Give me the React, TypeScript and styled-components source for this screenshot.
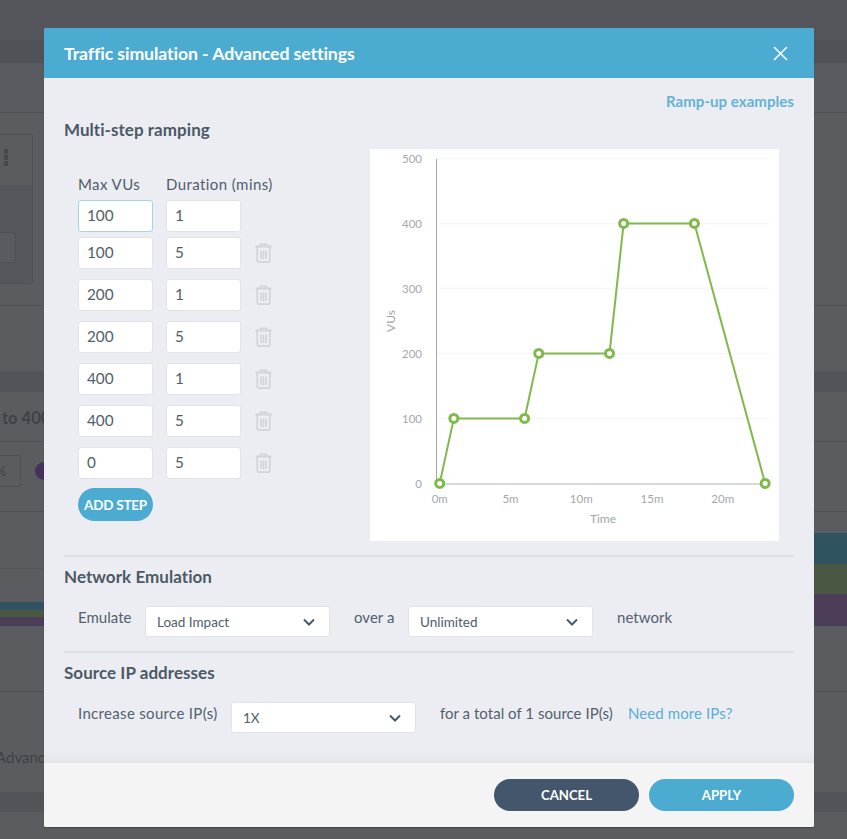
import React from 'react'
import styled, { createGlobalStyle } from 'styled-components'

const GlobalStyle = createGlobalStyle`
  html, body { margin: 0; padding: 0; background: #5b5c60; }
  body { font-family: Lato, "Open Sans", sans-serif; overflow: hidden; }
  * { box-sizing: border-box; }
`

const Page = styled.div`
  position: relative;
  width: 847px;
  height: 839px;
  overflow: hidden;
  background: #5b5c60;
`

/* dimmed page behind the modal */
const Band = styled.div<{ $h: number; $bg?: string; $line?: boolean }>`
  height: ${p => p.$h}px;
  background: ${p => p.$bg || 'transparent'};
  border-bottom: ${p => (p.$line ? '1px solid #505156' : 'none')};
  overflow: hidden;
`
const CardBand = styled(Band)`
  padding-top: 21px;
`
const GhostCard = styled.div`
  width: 33px;
  height: 150px;
  border: 1px solid #4f5055;
  border-left: 0;
  border-radius: 0 3px 3px 0;
  background: #56575c;
  overflow: hidden;
`
const GhostCardTop = styled.div`
  height: 50px;
  background: #5b5c60;
  padding: 14px 0 0 4px;
  display: flex;
  flex-direction: column;
  gap: 1px;
`
const GhostDot = styled.span`
  width: 4px;
  height: 5px;
  background: #47484c;
`
const GhostBox = styled.div`
  width: 16px;
  height: 31px;
  margin-top: 47px;
  background: #5a5b60;
  border: 1px solid #4f5055;
  border-left: 0;
  border-radius: 0 3px 3px 0;
`
const GhostHeading = styled.div`
  padding: 14px 0 0 2px;
  font-size: 16.5px;
  line-height: 24px;
  font-weight: 700;
  color: #404248;
  white-space: nowrap;
`
const GhostRow = styled.div`
  display: flex;
  align-items: center;
  padding-top: 13px;
`
const GhostPercent = styled.div`
  width: 21px;
  height: 32px;
  border: 1px solid #4f5055;
  border-left: 0;
  border-radius: 0 3px 3px 0;
  font-size: 14px;
  line-height: 30px;
  color: #404248;
  overflow: hidden;
  text-indent: -5px;
`
const GhostCircle = styled.span`
  width: 18px;
  height: 18px;
  margin-left: 14px;
  border-radius: 50%;
  background: #45325a;
`
const GhostLink = styled.div`
  padding-top: 55px;
  margin-left: -4px;
  font-size: 15px;
  line-height: 20px;
  color: #3f4146;
  white-space: nowrap;
`
const GhostChart = styled.svg`
  display: block;
`

/* modal */
const Modal = styled.div`
  position: absolute;
  left: 44px;
  top: 28px;
  width: 770px;
  height: 799px;
  display: flex;
  flex-direction: column;
  background: #ecedf2;
  border-radius: 3px 3px 2px 2px;
  overflow: hidden;
  box-shadow: 0 1px 1px rgba(0, 0, 0, 0.25);
`
const Header = styled.div`
  height: 50px;
  flex: none;
  display: flex;
  align-items: center;
  justify-content: space-between;
  padding: 0 26px 0 20px;
  background: #4babd0;
  color: #fff;
`
const HeaderTitle = styled.div`
  padding-top: 1px;
  font-size: 17.7px;
  font-weight: 700;
  letter-spacing: -0.1px;
`
const CloseIcon = styled.svg`
  display: block;
`
const Body = styled.div`
  flex: 1;
  padding: 0 20px;
  background: linear-gradient(to top, #e4e5e9 0, #ecedf2 12px);
`
const RampLink = styled.a`
  display: block;
  margin-top: 13px;
  text-align: right;
  font-size: 15px;
  line-height: 20px;
  font-weight: 700;
  letter-spacing: 0.05px;
  color: #62b3d5;
`
const SectionTitle = styled.h3<{ $top: number }>`
  margin: ${p => p.$top}px 0 0;
  font-size: 17px;
  line-height: 20px;
  font-weight: 700;
  letter-spacing: 0.05px;
  color: #4b5966;
`
const RampRow = styled.div`
  display: flex;
  margin-top: 9px;
`
const StepColumn = styled.div`
  width: 306px;
  padding: 26px 0 0 14px;
`
const StepHeads = styled.div`
  display: flex;
  gap: 13px;
  height: 18px;
  margin-bottom: 7px;
  font-size: 15px;
  line-height: 18px;
  letter-spacing: 0.42px;
  color: #4f5d6b;
  white-space: nowrap;
`
const StepHead = styled.span`
  width: 75px;
`
const StepRow = styled.div<{ $first?: boolean }>`
  display: flex;
  align-items: center;
  gap: 13px;
  height: 32px;
  margin-bottom: ${p => (p.$first ? 5 : 10)}px;
`
const NumberInput = styled.input<{ $focus?: boolean }>`
  width: 75px;
  height: 32px;
  padding: 0 8px 2px;
  font-family: inherit;
  font-size: 15.3px;
  color: #4f5d6b;
  background: #fff;
  border: 1px solid ${p => (p.$focus ? '#a3d5e9' : '#e2e3e7')};
  border-radius: 3px;
  outline: none;
`
const TrashIcon = styled.svg`
  display: block;
  margin-left: 1px;
`
const AddStep = styled.button`
  display: block;
  width: 75px;
  height: 33px;
  margin-top: -1px;
  padding: 0;
  border: 0;
  border-radius: 17px;
  background: #4babd0;
  color: #fff;
  font-family: inherit;
  font-size: 13.5px;
  font-weight: 700;
  letter-spacing: -0.25px;
`
const ChartPanel = styled.div`
  width: 409px;
  height: 392px;
  background: #fff;
`
const ChartSvg = styled.svg`
  display: block;
  font-family: Lato, sans-serif;
`
const Divider = styled.div<{ $top: number }>`
  height: 2px;
  margin-top: ${p => p.$top}px;
  background: #dfe0e4;
`
const FormRow = styled.div`
  display: flex;
  align-items: flex-start;
  margin-top: 19px;
  padding-left: 14px;
  height: 31px;
`
const FormText = styled.span<{ $w?: number; $wide?: boolean }>`
  flex: none;
  width: ${p => (p.$w ? `${p.$w}px` : 'auto')};
  font-size: 15px;
  line-height: 23px;
  letter-spacing: ${p => (p.$wide ? '0.32px' : '0.03px')};
  color: #52606d;
  white-space: nowrap;
`
const FormLink = styled.a`
  font-size: 15px;
  line-height: 23px;
  letter-spacing: 0.1px;
  color: #59afd3;
  white-space: nowrap;
`
const SelectBox = styled.div`
  flex: none;
  width: 185px;
  height: 31px;
  margin-right: 24px;
  padding: 0 14px 0 11px;
  display: flex;
  align-items: center;
  justify-content: space-between;
  background: #fff;
  border: 1px solid #e2e3e7;
  border-radius: 3px;
  font-size: 13.5px;
  color: #4f5d6b;
`
const Chevron = styled.svg`
  display: block;
`
const Footer = styled.div`
  height: 64px;
  flex: none;
  display: flex;
  justify-content: flex-end;
  gap: 10px;
  padding: 16px 20px 0;
  background: #f4f4f5;
`
const FooterButton = styled.button<{ $primary?: boolean }>`
  width: 145px;
  height: 32px;
  padding: 0;
  border: 0;
  border-radius: 16px;
  background: ${p => (p.$primary ? '#4babd0' : '#43566b')};
  color: #fff;
  font-family: inherit;
  font-size: 13.2px;
  font-weight: 700;
  letter-spacing: -0.05px;
`

const steps: [string, string][] = [
  ['100', '1'],
  ['100', '5'],
  ['200', '1'],
  ['200', '5'],
  ['400', '1'],
  ['400', '5'],
  ['0', '5'],
]

const points: [number, number][] = [
  [0, 0], [1, 100], [6, 100], [7, 200], [12, 200], [13, 400], [18, 400], [23, 0],
]
const px = (min: number) => 69.7 + min * 14.15
const py = (vus: number) => 334.4 - vus * 0.65

const Trash = () => (
  <TrashIcon width="17" height="20" viewBox="0 0 17 20" fill="none" stroke="#d2d3d7" strokeWidth="1.6">
    <path d="M5.5 3V1.2h6V3" />
    <path d="M0.5 3.5h16" strokeWidth="2" />
    <path d="M2.2 4v13.2c0 1 .7 1.9 1.8 1.9h9c1.1 0 1.8-.9 1.8-1.9V4" />
    <path d="M5.9 7.5v8.5M8.5 7.5v8.5M11.1 7.5v8.5" />
  </TrashIcon>
)

const Caret = () => (
  <Chevron width="12" height="8" viewBox="0 0 12 8" fill="none" stroke="#4b5966" strokeWidth="2">
    <path d="M1 1.5l5 5 5-5" />
  </Chevron>
)

const RampChart = () => (
  <ChartSvg width="409" height="392" viewBox="0 0 409 392">
    {[100, 200, 300, 400, 500].map(v => (
      <line key={v} x1="67" x2="399" y1={py(v)} y2={py(v)} stroke="#f6f6f7" strokeWidth="1.5" />
    ))}
    <line x1="66.5" x2="66.5" y1="10" y2="335" stroke="#a3a7ad" strokeWidth="1" />
    <line x1="66" x2="399" y1="335" y2="335" stroke="#c9cdd3" strokeWidth="1.5" />
    {[0, 100, 200, 300, 400, 500].map(v => (
      <text key={v} x="52" y={py(v) + 4.5} textAnchor="end" fontSize="11.5" fill="#a4a7ac">{v}</text>
    ))}
    {[0, 5, 10, 15, 20].map(m => (
      <text key={m} x={px(m)} y="354" textAnchor="middle" fontSize="11.5" fill="#a4a7ac">{m}m</text>
    ))}
    <text x="233" y="374" textAnchor="middle" fontSize="12" fill="#a0a4aa">Time</text>
    <text transform="translate(25 172) rotate(-90)" textAnchor="middle" fontSize="12" fill="#a0a4aa">VUs</text>
    <polyline
      points={points.map(([m, v]) => `${px(m)},${py(v)}`).join(' ')}
      fill="none"
      stroke="#7fb94c"
      strokeWidth="2"
    />
    {points.map(([m, v]) => (
      <circle key={m} cx={px(m)} cy={py(v)} r="4" fill="#fff" stroke="#7fb94c" strokeWidth="3" />
    ))}
  </ChartSvg>
)

const Backdrop = () => (
  <>
    <Band $h={41} $bg="#55565b" $line />
    <Band $h={22} $bg="#515257" />
    <Band $h={50} $bg="#5a5b60" $line />
    <CardBand $h={193} $line>
      <GhostCard>
        <GhostCardTop>
          <GhostDot />
          <GhostDot />
          <GhostDot />
        </GhostCardTop>
        <GhostBox />
      </GhostCard>
    </CardBand>
    <Band $h={65} />
    <Band $h={21} $bg="#535459" />
    <Band $h={50} $line>
      <GhostHeading>to 400</GhostHeading>
    </Band>
    <Band $h={70} $line>
      <GhostRow>
        <GhostPercent>%</GhostPercent>
        <GhostCircle />
      </GhostRow>
    </Band>
    <Band $h={180} $line>
      <GhostChart width="847" height="180" viewBox="0 0 847 180">
        <rect x="0" y="56" width="44" height="1" fill="#55565b" />
        <rect x="0" y="90" width="44" height="8" fill="#2f5360" />
        <rect x="0" y="98" width="44" height="7" fill="#4a5843" />
        <rect x="0" y="105" width="44" height="9" fill="#4c3e58" />
        <rect x="814" y="21" width="33" height="31" fill="#2f5360" />
        <rect x="814" y="52" width="33" height="30" fill="#4a5843" />
        <rect x="814" y="82" width="33" height="32" fill="#4c3e58" />
      </GhostChart>
    </Band>
    <Band $h={100}>
      <GhostLink>Advanced</GhostLink>
    </Band>
    <Band $h={20} $bg="#535459" />
  </>
)

export default function App() {
  return (
    <Page>
      <GlobalStyle />
      <Backdrop />
      <Modal>
        <Header>
          <HeaderTitle>Traffic simulation - Advanced settings</HeaderTitle>
          <CloseIcon width="15" height="15" viewBox="0 0 15 15" stroke="#fff" strokeWidth="1.6">
            <path d="M1 1l13 13M14 1L1 14" />
          </CloseIcon>
        </Header>
        <Body>
          <RampLink>Ramp-up examples</RampLink>
          <SectionTitle $top={9}>Multi-step ramping</SectionTitle>
          <RampRow>
            <StepColumn>
              <StepHeads>
                <StepHead>Max VUs</StepHead>
                <span>Duration (mins)</span>
              </StepHeads>
              {steps.map(([vus, mins], i) => (
                <StepRow key={i} $first={i === 0}>
                  <NumberInput $focus={i === 0} defaultValue={vus} />
                  <NumberInput defaultValue={mins} />
                  {i > 0 && <Trash />}
                </StepRow>
              ))}
              <AddStep>ADD STEP</AddStep>
            </StepColumn>
            <ChartPanel>
              <RampChart />
            </ChartPanel>
          </RampRow>
          <Divider $top={14} />
          <SectionTitle $top={10}>Network Emulation</SectionTitle>
          <FormRow>
            <FormText $w={67}>Emulate</FormText>
            <SelectBox>Load Impact<Caret /></SelectBox>
            <FormText $w={54}>over a</FormText>
            <SelectBox>Unlimited<Caret /></SelectBox>
            <FormText>network</FormText>
          </FormRow>
          <Divider $top={14} />
          <SectionTitle $top={10}>Source IP addresses</SectionTitle>
          <FormRow>
            <FormText $w={153} $wide>Increase source IP(s)</FormText>
            <SelectBox>1X<Caret /></SelectBox>
            <FormText $w={188}>for a total of 1 source IP(s)</FormText>
            <FormLink>Need more IPs?</FormLink>
          </FormRow>
        </Body>
        <Footer>
          <FooterButton>CANCEL</FooterButton>
          <FooterButton $primary>APPLY</FooterButton>
        </Footer>
      </Modal>
    </Page>
  )
}
